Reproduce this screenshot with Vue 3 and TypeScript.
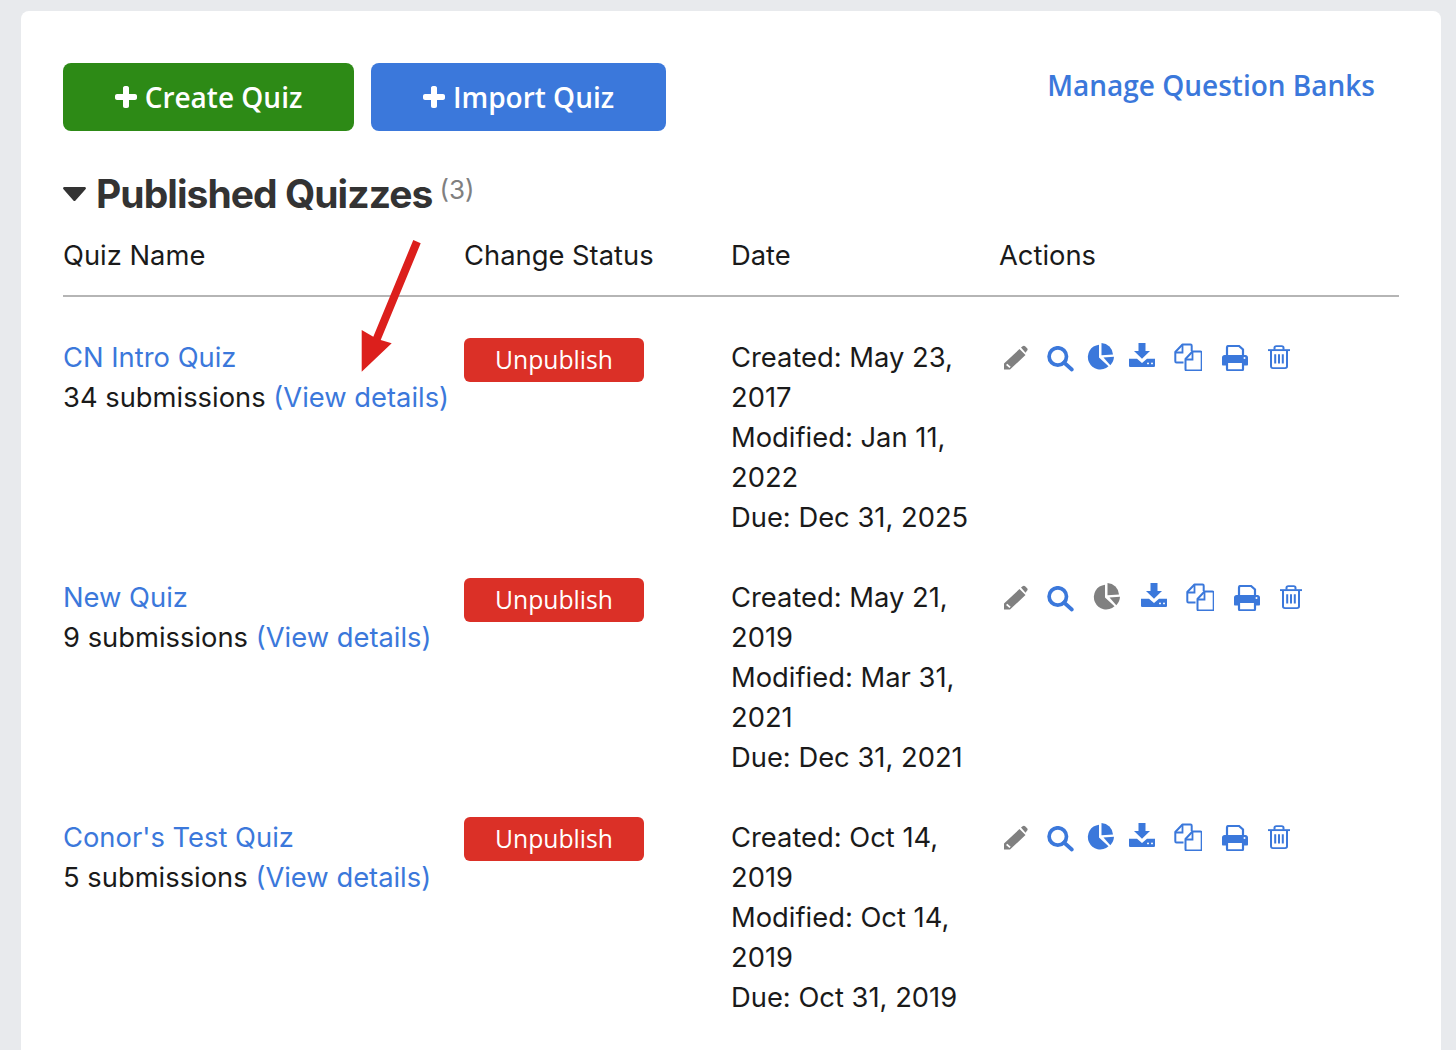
<script setup lang="ts">
interface Quiz {
  name: string
  subs: string
  dates: string[]
  btnNudge?: boolean
  statsOff?: boolean
}
const quizzes: Quiz[] = [
  { name: 'CN Intro Quiz', subs: '34 submissions', dates: ['Created: May 23, 2017', 'Modified: Jan 11, 2022', 'Due: Dec 31, 2025'] },
  { name: 'New Quiz', subs: '9 submissions', dates: ['Created: May 21, 2019', 'Modified: Mar 31, 2021', 'Due: Dec 31, 2021'], statsOff: true },
  { name: "Conor's Test Quiz", subs: '5 submissions', dates: ['Created: Oct 14, 2019', 'Modified: Oct 14, 2019', 'Due: Oct 31, 2019'], btnNudge: true },
]
</script>

<template>
  <div class="page">
    <svg class="defs" width="0" height="0" aria-hidden="true">
      <symbol id="i-pencil" viewBox="0 0 24 26">
        <path d="M0 24.500V18.500L15.500 4l6 6L6 24.500Zm2-4.500 3.500 3 1.200-1.200-3.400-3ZM17 2.600 18.600 1.200c.8-.7 1.800-.7 2.500 0l2 2c.7.7.7 1.700 0 2.400L21.500 7.700Z" />
      </symbol>
      <symbol id="i-search" viewBox="0 0 27 27">
        <circle cx="10.800" cy="10.500" r="8.700" fill="none" stroke="currentColor" stroke-width="3.700" />
        <path d="M17 16.500 24.800 23.500" fill="none" stroke="currentColor" stroke-width="3.700" stroke-linecap="round" />
      </symbol>
      <symbol id="i-pie" viewBox="0 0 27 27">
        <path d="M12 1.700V14.500L21.500 23.300A12.400 12.400 0 1 1 12 1.700Z" />
        <path d="M14.500 0A12.200 12.200 0 0 1 26 11.500L14.500 12.300Z" />
        <path d="M16.500 14.500 27 13.800A12.600 12.600 0 0 1 23.300 22.200Z" />
      </symbol>
      <symbol id="i-download" viewBox="0 0 26 25.300" preserveAspectRatio="none">
        <path d="M9.500 0h7v8.500H21L13 16.500 5 8.500h4.500Z" />
        <path d="M0 16.500h8L13 21l5-4.500h8V24c0 .8-.6 1.300-1.300 1.300H1.300C.6 25.300 0 24.800 0 24Z" />
        <circle cx="19" cy="21.500" r="1" fill="#fff" />
        <circle cx="23" cy="21.500" r="1" fill="#fff" />
      </symbol>
      <symbol id="i-copy" viewBox="0 0 28 28">
        <path d="M9.500 19.500H2.500c-.8 0-1.200-.5-1.200-1.200V9L8.500 1.500h8c.7 0 1.200.5 1.200 1.200V8" fill="none" stroke="currentColor" stroke-width="2" stroke-linejoin="round" />
        <path d="M1.500 9.500h7v-8" fill="none" stroke="currentColor" stroke-width="1.800" />
        <path d="M11.500 16 18.500 8.500h8c.7 0 1.200.5 1.200 1.200v16.600c0 .7-.5 1.200-1.200 1.200H12.700c-.7 0-1.200-.5-1.200-1.200Z" fill="#fff" stroke="currentColor" stroke-width="2" stroke-linejoin="round" />
        <path d="M11.500 16.500h7v-8" fill="none" stroke="currentColor" stroke-width="1.800" />
      </symbol>
      <symbol id="i-print" viewBox="0 0 26 26">
        <path d="M5 10V2.500C5 1.500 5.800 1 6.500 1h10.500L21 4.500V10" fill="none" stroke="currentColor" stroke-width="2.200" />
        <path d="M2.500 10h21c1.400 0 2.500 1 2.500 2.500v7c0 .5-.4 1-1 1h-4v-3.500H5v3.500H1c-.6 0-1-.5-1-1v-7C0 11 1.100 10 2.500 10Z" />
        <path d="M5 17h16v7c0 .8-.6 1.300-1.300 1.300H6.300C5.600 25.300 5 24.800 5 24Z" fill="none" stroke="currentColor" stroke-width="2.200" />
        <circle cx="22.500" cy="13" r="1" fill="#fff" />
      </symbol>
      <symbol id="i-trash" viewBox="0 0 22 25.800" preserveAspectRatio="none">
        <path d="M0 5.500h22" stroke="currentColor" stroke-width="2" fill="none" />
        <path d="M6.500 5V3c0-1 .7-1.800 1.800-1.800h5.400c1.100 0 1.800.8 1.800 1.800v2" fill="none" stroke="currentColor" stroke-width="2" />
        <path d="M3 5.500v17.300c0 1.200.8 2 2 2h12c1.200 0 2-.8 2-2V5.500" fill="none" stroke="currentColor" stroke-width="2" />
        <path d="M7.200 10v10M11 10v10M14.800 10v10" fill="none" stroke="currentColor" stroke-width="2" />
      </symbol>
    </svg>

    <main class="card">
      <svg class="arrow" width="70" height="140" viewBox="0 0 70 140" aria-hidden="true">
        <path d="M52.300 0 59.700 3.300 19.700 100 30.700 103.300 0.700 131.700 0.700 90 12.300 96.700Z" />
      </svg>

      <header class="top">
        <div class="buttons">
          <a class="btn green">
            <svg class="plus" width="22" height="22" viewBox="0 0 22 22"><path d="M8 2c0-1 .7-2 2-2h2c1.300 0 2 1 2 2v6h6c1 0 2 .7 2 2v2c0 1.300-1 2-2 2h-6v6c0 1-.7 2-2 2h-2c-1.300 0-2-1-2-2v-6H2c-1 0-2-.7-2-2v-2c0-1.300 1-2 2-2h6Z" /></svg>
            <span>Create Quiz</span>
          </a>
          <a class="btn blue">
            <svg class="plus" width="22" height="22" viewBox="0 0 22 22"><path d="M8 2c0-1 .7-2 2-2h2c1.300 0 2 1 2 2v6h6c1 0 2 .7 2 2v2c0 1.300-1 2-2 2h-6v6c0 1-.7 2-2 2h-2c-1.300 0-2-1-2-2v-6H2c-1 0-2-.7-2-2v-2c0-1.300 1-2 2-2h6Z" /></svg>
            <span>Import Quiz</span>
          </a>
        </div>
        <a class="banks">Manage Question Banks</a>
      </header>

      <h2 class="title">
        <svg class="caret" width="23" height="14" viewBox="0 0 23 14"><path d="M1.500 0h20c1.300 0 1.900 1.400 1 2.300L12.500 13.400c-.6.700-1.500.700-2.100 0L.5 2.300C-.4 1.400.2 0 1.500 0Z" /></svg>
        <span class="title-text">Published Quizzes</span>
        <span class="count">(3)</span>
      </h2>

      <div class="grid head">
        <div>Quiz Name</div>
        <div>Change Status</div>
        <div>Date</div>
        <div>Actions</div>
      </div>

      <div v-for="q in quizzes" :key="q.name" class="grid row">
        <div class="name-cell">
          <a class="link">{{ q.name }}</a><br />
          <span class="subs">{{ q.subs }} <a class="link">(View details)</a></span>
        </div>
        <div>
          <button class="unpublish" :class="{ nudge: q.btnNudge }">Unpublish</button>
        </div>
        <div class="dates">
          <div v-for="d in q.dates" :key="d">{{ d }}</div>
        </div>
        <div class="actions">
          <svg class="ic gray m-pencil" width="24" height="26"><use href="#i-pencil" /></svg>
          <svg class="ic m-search" width="27" height="27"><use href="#i-search" /></svg>
          <svg class="ic m-pie" :class="{ off: q.statsOff }" width="27" height="27"><use href="#i-pie" /></svg>
          <svg class="ic m-dl" :class="{ aftoff: q.statsOff }" width="26" height="24"><use href="#i-download" /></svg>
          <svg class="ic m-copy" width="28" height="28"><use href="#i-copy" /></svg>
          <svg class="ic m-print" width="26" height="26"><use href="#i-print" /></svg>
          <svg class="ic m-trash" width="22" height="24"><use href="#i-trash" /></svg>
        </div>
      </div>
    </main>
  </div>
</template>

<style scoped>
.page {
  height: 1050px;
  overflow: hidden;
  background: #e8eaed;
  padding: 11px 15px 0 21px;
  box-sizing: border-box;
  font-family: Inter, Roboto, "Liberation Sans", sans-serif;
  font-size: 27.35px;
  line-height: 40px;
  color: #1a1a1a;
}
.defs {
  position: absolute;
}
.card {
  position: relative;
  background: #fff;
  border-radius: 8px;
  padding: 52px 42px 40px;
  min-height: 1100px;
  box-sizing: border-box;
}
.arrow {
  position: absolute;
  left: 340px;
  top: 229px;
  fill: #dc1f1c;
  z-index: 1;
}
.top {
  display: flex;
  justify-content: space-between;
  align-items: flex-start;
  padding-right: 24px;
}
.buttons {
  display: flex;
  gap: 17px;
}
.btn {
  display: flex;
  align-items: center;
  justify-content: center;
  gap: 8px;
  height: 68px;
  border-radius: 8px;
  color: #fff;
  font-family: "Open Sans", sans-serif;
  font-size: 28px;
  font-weight: 600;
  box-sizing: border-box;
}
.plus {
  fill: #fff;
}
.green {
  width: 291px;
  background: #2d8a16;
}
.blue {
  width: 295px;
  background: #3b78db;
}
.banks {
  font-family: "Open Sans", sans-serif;
  font-size: 28px;
  font-weight: 600;
  line-height: 44px;
  color: #3b78db;
}
.title {
  display: flex;
  align-items: flex-start;
  margin: 38px 0 0;
  height: 56px;
}
.caret {
  fill: #333;
  margin-top: 18px;
  margin-right: 10px;
}
.title-text {
  font-size: 39px;
  font-weight: 700;
  line-height: 50px;
  letter-spacing: -0.95px;
  color: #333;
}
.count {
  font-size: 26px;
  font-weight: 400;
  color: #808080;
  line-height: 36px;
  margin-left: 7px;
  margin-top: 3px;
}
.grid {
  display: grid;
  grid-template-columns: 401px 267px 268px 400px;
}
.head {
  margin-top: -1px;
  padding: 12px 0 19px;
  border-bottom: 2px solid #b5b5b5;
  align-items: start;
}
.row {
  height: 240px;
}
.head + .row {
  margin-top: 40px;
}
.name-cell {
  white-space: nowrap;
  padding-top: 1px;
}
.link {
  color: #3b78db;
}
.unpublish {
  display: block;
  width: 180px;
  height: 44px;
  margin-top: 1px;
  padding: 0 0 2px;
  border: none;
  border-radius: 6px;
  background: #db3027;
  color: #fff;
  font-family: "Open Sans", sans-serif;
  font-size: 24.7px;
  font-weight: 500;
}
.unpublish.nudge {
  margin-top: 0;
}
.dates {
  padding: 1px 24px 0 0;
}
.actions {
  display: flex;
  align-items: flex-start;
  padding-top: 6px;
  color: #3b78db;
}
.ic {
  display: block;
  fill: currentColor;
  flex: none;
}
.gray,
.off {
  color: #808080;
}
.m-pencil { margin: 2px 0 0 5px; }
.m-search { margin: 3px 0 0 19px; }
.m-pie { margin-left: 13px; }
.m-dl { margin-left: 15px; }
.m-copy { margin-left: 19px; }
.m-print { margin: 2px 0 0 20px; }
.m-trash { margin: 2px 0 0 20px; }
.m-pie.off { margin-left: 19px; }
.m-dl.aftoff { margin-left: 21px; }
</style>
